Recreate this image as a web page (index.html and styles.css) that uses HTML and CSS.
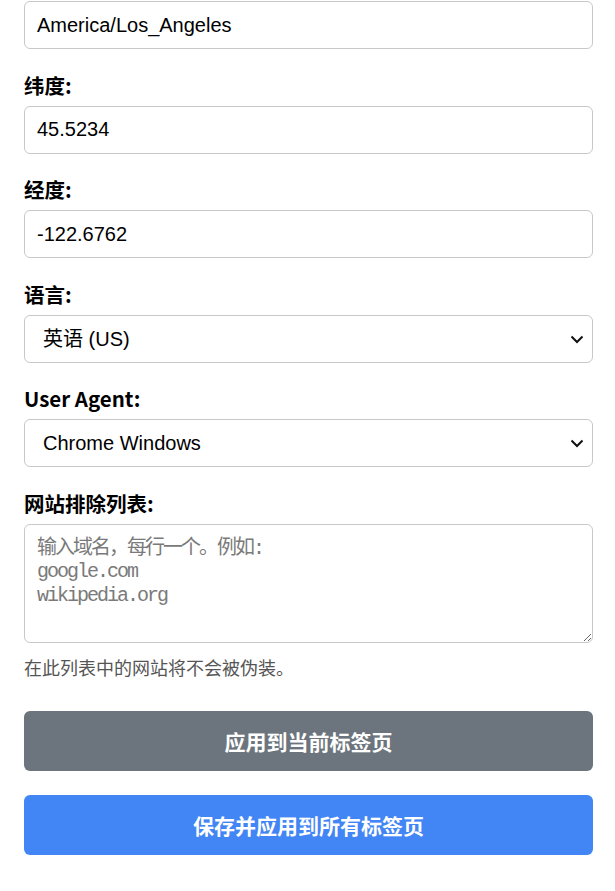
FILE: index.html
```html
<!DOCTYPE html>
<html lang="zh-CN">
<head>
  <meta charset="UTF-8">
  <title>设置</title>
  <link rel="stylesheet" href="styles.css">
</head>
<body>
  <div class="panel">
    <div class="field">
      <input class="input-field" type="text" value="America/Los_Angeles">
    </div>

    <div class="field">
      <label class="label" for="latitude">纬度:</label>
      <input id="latitude" class="input-field" type="text" value="45.5234">
    </div>

    <div class="field">
      <label class="label" for="longitude">经度:</label>
      <input id="longitude" class="input-field" type="text" value="-122.6762">
    </div>

    <div class="field">
      <label class="label" for="language">语言:</label>
      <div class="select-wrap">
        <select id="language" class="select-field">
          <option>英语 (US)</option>
          <option>中文 (简体)</option>
        </select>
        <svg class="chevron" width="14" height="9" viewBox="0 0 14 9"><path d="M1.5 1.5 L7 7 L12.5 1.5" fill="none" stroke="#111" stroke-width="2"/></svg>
      </div>
    </div>

    <div class="field">
      <label class="label" for="user-agent">User Agent:</label>
      <div class="select-wrap">
        <select id="user-agent" class="select-field">
          <option>Chrome Windows</option>
          <option>Chrome Mac</option>
        </select>
        <svg class="chevron" width="14" height="9" viewBox="0 0 14 9"><path d="M1.5 1.5 L7 7 L12.5 1.5" fill="none" stroke="#111" stroke-width="2"/></svg>
      </div>
    </div>

    <div class="field field-last">
      <label class="label" for="exclude-list">网站排除列表:</label>
      <textarea id="exclude-list" class="textarea-field" placeholder="输入域名，每行一个。例如:&#10;google.com&#10;wikipedia.org"></textarea>
      <p class="hint">在此列表中的网站将不会被伪装。</p>
    </div>

    <button class="button button-gray">应用到当前标签页</button>
    <button class="button button-blue">保存并应用到所有标签页</button>
  </div>
</body>
</html>
```

FILE: styles.css
```css
body {
  margin: 0;
  padding: 1px 22px 0 24px;
  font-family: "Liberation Sans", "Noto Sans CJK SC", sans-serif;
  background: #fff;
  color: #000;
}
.field {
  margin-bottom: 22.5px;
}
.field-last {
  margin-bottom: 0;
}
.label {
  display: block;
  font-family: "Noto Sans CJK SC", sans-serif;
  font-weight: 700;
  font-size: 20.5px;
  line-height: 26px;
  margin-bottom: 8px;
}
.input-field,
.select-field,
.textarea-field {
  display: block;
  box-sizing: border-box;
  width: 100%;
  border: 1px solid #c8c8c8;
  border-radius: 6px;
  background: #fff;
  color: #000;
  font-family: "Liberation Sans", "Noto Sans CJK SC", sans-serif;
  font-size: 20px;
  margin: 0;
}
.input-field {
  height: 48px;
  padding: 0 12px;
}
.select-wrap {
  position: relative;
}
.select-field {
  height: 48px;
  padding: 0 40px 0 18px;
  appearance: none;
  -webkit-appearance: none;
}
.chevron {
  position: absolute;
  right: 9px;
  top: 20px;
  pointer-events: none;
}
.textarea-field {
  height: 119px;
  padding: 12px 12px;
  font-family: "Liberation Mono", "Noto Sans CJK SC", monospace;
  letter-spacing: -2px;
  line-height: 23.5px;
  resize: vertical;
}
.textarea-field::placeholder {
  color: #7a7a7a;
}
.hint {
  margin: 14px 0 0;
  font-size: 18px;
  line-height: 24px;
  color: #555;
}
.button {
  display: block;
  width: 100%;
  height: 60px;
  border: none;
  border-radius: 6px;
  color: #fff;
  font-family: "Noto Sans CJK SC", sans-serif;
  font-weight: 700;
  font-size: 21px;
  cursor: pointer;
}
.button-gray {
  margin-top: 30px;
  background-color: #6c757d;
}
.button-blue {
  margin-top: 24px;
  background-color: #4285f4;
}
```
